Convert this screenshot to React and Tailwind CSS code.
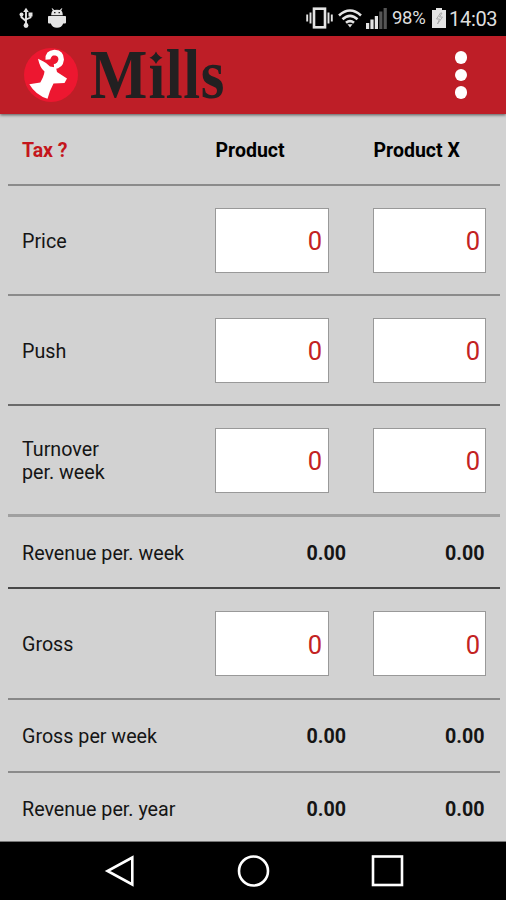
function StatusBar() {
  return (
    <div className="flex h-9 shrink-0 items-center bg-black text-[18.5px] text-[#dedede]">
      <svg className="ml-[19px] h-[22px] w-[14px]" viewBox="0 0 14 22" fill="none" stroke="#e4e4e4" strokeWidth="1.9">
        <path d="M7 3v14M2.5 7v3.2L7 14M11.5 8v2.5L7 12.5" />
        <path d="M4.2 5L7 .8l2.8 4.200z" fill="#e4e4e4" stroke="none" />
        <circle cx="7" cy="18.5" r="2.4" fill="#e4e4e4" stroke="none" />
        <circle cx="2.5" cy="7.5" r="2" fill="#e4e4e4" stroke="none" />
        <path d="M9.5 5.5h4v4h-4z" fill="#e4e4e4" stroke="none" />
      </svg>
      <svg className="ml-[15px] h-[20px] w-[18px]" viewBox="0 0 18 20" fill="#e4e4e4">
        <path d="M3.2 7.3C3.2 4.8 3.9 3.300 4.800 2.4L3.600.6l.8-.4L6.2 2q2.800-.6 5.600 0L13.600.2l.8.4-1.200 1.800c.9.9 1.600 2.400 1.600 4.900z" />
        <path d="M.8 8h16.400q.8 0 .8.800v5.700q0 1-1 1h-1.800c-.8 2.800-3.200 4.300-6.200 4.300s-5.400-1.500-6.200-4.300H1q-1 0-1-1V8.800q0-.8.800-.8z" />
        <path d="M6 4h1.500v1.300H6zM10.500 4H12v1.300h-1.500z" fill="#222" />
      </svg>
      <svg className="ml-[240px] h-[22px] w-[27px]" viewBox="0 0 27 22" fill="none" stroke="#e4e4e4" strokeWidth="2">
        <rect x="8" y="1.700" width="11" height="18.600" strokeWidth="2.600" />
        <path d="M4.500 5.500v11M1.200 7.500v7M22.500 5.500v11M25.800 7.500v7" strokeWidth="1.900" />
      </svg>
      <svg className="ml-[5px] h-[20px] w-[24px]" viewBox="0 0 24 20" fill="none" stroke="#e4e4e4" strokeWidth="2.600">
        <path d="M1 7.500Q12-2.500 23 7.500M4.500 11.300Q12 4.500 19.500 11.300M8 14.800Q12 11.400 16 14.800" />
        <path d="M9.500 16.200h5L12 19.500z" fill="#e4e4e4" stroke="none" />
      </svg>
      <svg className="ml-[4px] h-[21px] w-[21px]" viewBox="0 0 21 21" fill="#e4e4e4">
        <path d="M0 15h3.200v6H0zM4.400 11.500h3.200V21H4.400zM8.800 8H12v13H8.800z" />
        <path d="M13.200 3.500h3.200V21h-3.200zM17.600 0h3.200v21h-3.200z" fill="#555" />
      </svg>
      <span className="ml-[5px] mt-[2px] w-[38px] whitespace-nowrap tracking-[-0.3px]">98%</span>
      <svg className="ml-[2px] h-[20px] w-[14px]" viewBox="0 0 14 20">
        <path d="M4 0h6v2h4v18H0V2h4z" fill="#e4e4e4" />
        <path d="M8.500 5L4.500 11h3L5.500 16l5-7h-3l2.500-4z" fill="none" stroke="#aaa" />
      </svg>
      <span className="ml-[3px] mt-[2px] whitespace-nowrap text-[20px] tracking-[-0.3px]">14:03</span>
    </div>
  );
}

function Header() {
  return (
    <header className="z-10 flex h-[78px] shrink-0 items-center justify-between bg-[#be1e27] pl-[23px] pr-[39px] shadow-[0_1px_3px_rgba(0,0,0,0.6)]">
      <svg className="h-[78px] w-[210px] overflow-visible" viewBox="23 36 210 78">
        <circle cx="51" cy="75" r="27" fill="#ed1730" />
        <path
          d="M38 58.700L43.500 61.500L46 63L50 66.500L56 67.500L57 72L67 78.500L64.500 83L53.500 83.500L50 91L47.500 98.700Q36 95.500 29.300 84.300L40.300 82.500Q44 76 44.500 71.500Q40 68 38 58.700Z"
          fill="#fff"
        />
        <path d="M48.200 59.500Q47.800 53 54.500 52.500Q61.200 53 61.200 59.500Q60.500 66 54 66.500" fill="none" stroke="#fff" strokeWidth="5.500" />
        <path d="M50.500 58.500Q52.500 55.500 55.500 57.500Q58 60 56 63Q53.500 65 50.500 63Q54 62.300 53.500 60Q52.300 58.500 50.500 60Z" fill="#ed1730" />
        <g transform="translate(90 97.500) scale(.88 1)">
          <text
            x="0 66.500 86 106 125.800"
            y="0"
            className="font-['Liberation_Serif',serif] text-[69px] font-bold"
            fill="#222021"
          >
            Mills
          </text>
        </g>
        <rect x="149" y="46" width="15.500" height="18.500" fill="#be1e27" />
        <path d="M156 51.500Q158 56 162.500 57.800Q158 59.500 156 64Q154 59.500 149.500 57.800Q154 56 156 51.500Z" fill="#222021" />
      </svg>
      <div className="flex flex-col gap-[5px]">
        <span className="size-[12.500px] rounded-full bg-white" />
        <span className="size-[12.500px] rounded-full bg-white" />
        <span className="size-[12.500px] rounded-full bg-white" />
      </div>
    </header>
  );
}

const line = "ml-2 mr-1.5 flex shrink-0 items-center pl-[14px]";

function InputRow({ label, className }) {
  return (
    <div className={`${line} ${className}`}>
      <span className="w-[193px] whitespace-pre-line pt-[2px] leading-[23px]">{label}</span>
      <input
        defaultValue="0"
        className="h-[65px] w-[114px] border border-[#999] bg-white pr-[6px] pt-[2px] text-right text-[25.500px] text-[#c32222] outline-none"
      />
      <input
        defaultValue="0"
        className="ml-[44px] h-[65px] w-[113px] border border-[#999] bg-white pr-[5px] pt-[2px] text-right text-[25.500px] text-[#c32222] outline-none"
      />
    </div>
  );
}

function TotalRow({ label, className }) {
  return (
    <div className={`${line} pt-[3px] ${className}`}>
      <span className="w-[193px]">{label}</span>
      <span className="w-[131px] text-right font-bold">0.00</span>
      <span className="w-[138.500px] text-right font-bold">0.00</span>
    </div>
  );
}

function NavBar() {
  return (
    <nav className="flex h-[58px] shrink-0 items-center bg-black">
      <svg className="h-[58px] w-full" viewBox="0 0 506 58" fill="none" stroke="#fff" strokeWidth="2.600">
        <path d="M132.300 15.500v27L107.500 29z" />
        <circle cx="253.500" cy="29" r="14.500" />
        <rect x="373" y="14.500" width="29" height="28.500" />
      </svg>
    </nav>
  );
}

export default function App() {
  return (
    <div className="flex h-[900px] w-[506px] flex-col overflow-hidden bg-[#d2d2d2] font-[Roboto,sans-serif] text-[19.700px] text-[#151515]">
      <StatusBar />
      <Header />
      <main className="flex h-[728px] shrink-0 flex-col border-b border-[#777]">
        <div className={`${line} h-[72px] border-b-2 border-[#8b8b8b] pt-[3px] text-[19.500px] font-bold text-black`}>
          <span className="w-[193.500px] text-[#c4161c]">Tax ?</span>
          <span className="w-[158px]">Product</span>
          <span>Product X</span>
        </div>
        <InputRow label="Price" className="h-[110px] border-b-2 border-[#8b8b8b]" />
        <InputRow label="Push" className="h-[110px] border-b-2 border-[#6a6a6a]" />
        <InputRow label={"Turnover\nper. week"} className="h-[111px] border-b-3 border-[#a0a0a0]" />
        <TotalRow label="Revenue per. week" className="h-[72px] border-b-2 border-[#484848]" />
        <InputRow label="Gross" className="h-[111px] border-b-2 border-[#888]" />
        <TotalRow label="Gross per week" className="h-[73px] border-b-2 border-[#8b8b8b]" />
        <TotalRow label="Revenue per. year" className="h-[71px]" />
      </main>
      <NavBar />
    </div>
  );
}
